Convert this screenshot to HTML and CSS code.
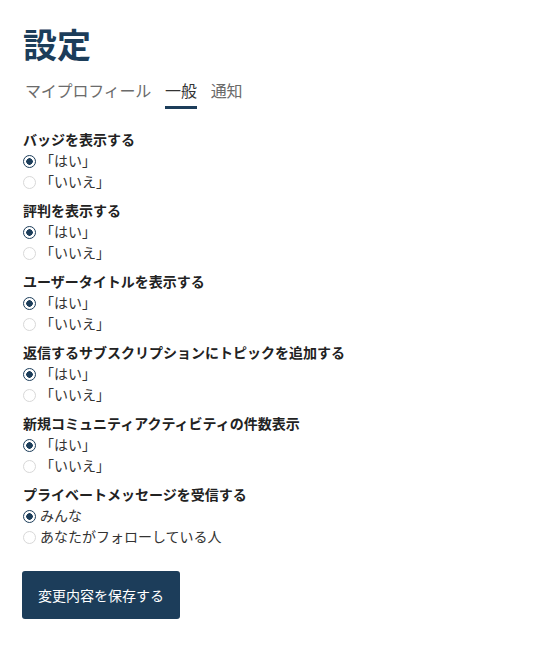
FILE: index.html
```html
<!DOCTYPE html>
<html lang="ja">
  <head>
    <meta charset="UTF-8" />
    <meta name="viewport" content="width=device-width, initial-scale=1.0" />
    <title>設定</title>
    <link rel="stylesheet" href="styles.css">
  </head>
  <body>
    <div class="settings">
      <h1 class="page-title">設定</h1>

      <nav class="tabs">
        <a class="tab">マイプロフィール</a>
        <a class="tab active">一般</a>
        <a class="tab">通知</a>
      </nav>

      <form class="settings-form">
        <fieldset class="group">
          <legend class="group-title">バッジを表示する</legend>
          <label class="option"><input type="radio" name="badge" checked /> 「はい」</label>
          <label class="option"><input type="radio" name="badge" /> 「いいえ」</label>
        </fieldset>

        <fieldset class="group">
          <legend class="group-title">評判を表示する</legend>
          <label class="option"><input type="radio" name="rep" checked /> 「はい」</label>
          <label class="option"><input type="radio" name="rep" /> 「いいえ」</label>
        </fieldset>

        <fieldset class="group">
          <legend class="group-title">ユーザータイトルを表示する</legend>
          <label class="option"><input type="radio" name="usertitle" checked /> 「はい」</label>
          <label class="option"><input type="radio" name="usertitle" /> 「いいえ」</label>
        </fieldset>

        <fieldset class="group">
          <legend class="group-title">返信するサブスクリプションにトピックを追加する</legend>
          <label class="option"><input type="radio" name="subscribe" checked /> 「はい」</label>
          <label class="option"><input type="radio" name="subscribe" /> 「いいえ」</label>
        </fieldset>

        <fieldset class="group">
          <legend class="group-title">新規コミュニティアクティビティの件数表示</legend>
          <label class="option"><input type="radio" name="activity" checked /> 「はい」</label>
          <label class="option"><input type="radio" name="activity" /> 「いいえ」</label>
        </fieldset>

        <fieldset class="group">
          <legend class="group-title">プライベートメッセージを受信する</legend>
          <label class="option"><input type="radio" name="pm" checked />みんな</label>
          <label class="option"><input type="radio" name="pm" />あなたがフォローしている人</label>
        </fieldset>

        <button type="button" class="save-btn">変更内容を保存する</button>
      </form>
    </div>
  </body>
</html>
```

FILE: styles.css
```css
/* Global */
body {
  font-family: "Noto Sans CJK JP", "Noto Sans", sans-serif;
  color: #333;
  background: #fff;
  margin: 0;
  padding: 0;
}

.settings {
  padding: 24px 22px 24px 23px;
}

.page-title {
  margin: 0;
  font-size: 34px;
  line-height: 40px;
  font-weight: bold;
  color: #1c3d5a;
}

/* Tabs */
.tabs {
  display: flex;
  gap: 14px;
  margin: 14px 0 0 2px;
}

.tab {
  font-size: 16px;
  line-height: 24px;
  letter-spacing: -0.2px;
  color: #6b6b6b;
  padding-bottom: 4px;
  border-bottom: 3px solid transparent;
}

.tab.active {
  color: #333;
  border-bottom-color: #1c3d5a;
}

/* Form */
.settings-form {
  margin-top: 20px;
}

.group {
  border: none;
  margin: 0 0 8px;
  padding: 0;
  display: flex;
  flex-direction: column;
}

.group-title {
  padding: 0;
  font-size: 14px;
  line-height: 21px;
  font-weight: bold;
  color: #222;
}

.option {
  display: flex;
  align-items: center;
  font-size: 14px;
  line-height: 21px;
  color: #333;
}

.option input {
  appearance: none;
  width: 13px;
  height: 13px;
  margin: 1px 4px 0 0;
  border: 1px solid #d8d8d8;
  border-radius: 50%;
  background: #fff;
}

.option input:checked {
  border: 1.5px solid #1c3d5a;
  background: radial-gradient(circle, #1c3d5a 0 3px, #fff 3.5px);
}

/* Save button */
.save-btn {
  margin-top: 16px;
  margin-left: -1px;
  background: #1c3d5a;
  color: #fff;
  border: none;
  border-radius: 3px;
  height: 48px;
  padding: 0 16px;
  font-family: inherit;
  font-size: 14px;
  cursor: pointer;
}
```
